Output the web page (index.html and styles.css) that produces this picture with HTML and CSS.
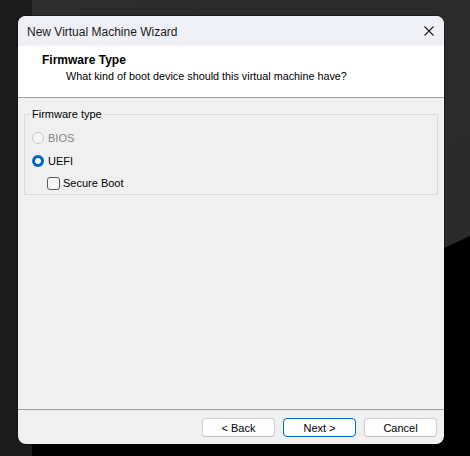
FILE: index.html
```html
<!DOCTYPE html>
<html>
<head>
<meta charset="utf-8">
<link rel="stylesheet" href="styles.css">
</head>
<body>
<div class="dialog">
  <div class="titlebar">
    <span class="title">New Virtual Machine Wizard</span>
    <span class="close"><svg width="10" height="10" viewBox="0 0 10 10"><path d="M0.5 0.5 L9.5 9.5 M9.5 0.5 L0.5 9.5" stroke="#1a1a1a" stroke-width="1.1" fill="none"/></svg></span>
  </div>
  <div class="header">
    <div class="h-title">Firmware Type</div>
    <div class="h-sub">What kind of boot device should this virtual machine have?</div>
  </div>
  <div class="content">
    <fieldset class="group">
      <legend>Firmware type</legend>
      <div class="opt disabled"><span class="radio"></span>BIOS</div>
      <div class="opt"><span class="radio checked"></span>UEFI</div>
      <div class="opt sub"><span class="check"></span>Secure Boot</div>
    </fieldset>
  </div>
  <div class="footer">
    <button class="btn">&lt; Back</button>
    <button class="btn primary">Next &gt;</button>
    <button class="btn">Cancel</button>
  </div>
</div>
</body>
</html>
```

FILE: styles.css
```css
html, body {
  margin: 0;
  padding: 0;
}
body {
  width: 470px;
  height: 456px;
  overflow: hidden;
  font-family: "Liberation Sans", Arial, sans-serif;
  font-size: 11px;
  color: #000;
  background:
    linear-gradient(to right, #1c1c1c 32px, transparent 32px),
    linear-gradient(155deg, #2d2d2d 0px, #2a2a2a 412px, #000 413px, #000 100%);
  padding-top: 16px;
  box-sizing: border-box;
}
.dialog {
  margin-left: 18px;
  width: 426px;
  height: 428px;
  display: flex;
  flex-direction: column;
  background: #f0f0f0;
  border-radius: 8px;
  overflow: hidden;
  box-shadow: 0 0 0 1px rgba(0,0,0,0.35);
}
.titlebar {
  height: 30px;
  flex: none;
  display: flex;
  align-items: center;
  justify-content: space-between;
  background: #eff0f6;
  padding: 0 10px 0 9px;
}
.title {
  font-size: 12px;
  color: #1a1a1a;
  padding-top: 1px;
}
.close {
  display: flex;
  width: 10px;
  height: 10px;
  margin-top: -1px;
}
.header {
  height: 52px;
  flex: none;
  background: #fff;
  border-bottom: 1px solid #a0a0a0;
  padding-top: 7px;
  box-sizing: border-box;
}
.h-title {
  font-weight: bold;
  font-size: 12px;
  line-height: 15px;
  padding-left: 24px;
}
.h-sub {
  font-size: 10.8px;
  line-height: 13px;
  margin-top: 2px;
  padding-left: 48px;
}
.content {
  flex: 1;
  padding-top: 10px;
}
.group {
  margin: 0 6px;
  border: 1px solid #dcdcdc;
  padding: 5px 0 0 7px;
  min-width: 0;
}
.group legend {
  padding: 0 2px;
  margin-left: -2px;
  line-height: 13px;
  color: #000;
}
.opt {
  display: flex;
  align-items: center;
  height: 23px;
}
.opt.disabled {
  color: #838383;
}
.opt.sub {
  padding-left: 15px;
  height: 22px;
}
.radio {
  width: 12px;
  height: 12px;
  box-sizing: border-box;
  border-radius: 50%;
  border: 1px solid #5a5a5a;
  margin-right: 4px;
  flex: none;
}
.disabled .radio {
  border-color: #c8c8c8;
  background: #f5f5f5;
}
.radio.checked {
  border: none;
  background: radial-gradient(circle, #fff 0 2.6px, #0067c0 3.2px);
}
.check {
  width: 13px;
  height: 13px;
  box-sizing: border-box;
  border: 1px solid #5a5a5a;
  border-radius: 3px;
  background: #f7f7f7;
  margin-right: 3px;
  flex: none;
}
.footer {
  flex: none;
  height: 35px;
  box-sizing: border-box;
  border-top: 1px solid #a0a0a0;
  display: flex;
  justify-content: flex-end;
  gap: 8px;
  padding: 8px 7px 0 0;
}
.btn {
  width: 73px;
  height: 19px;
  box-sizing: border-box;
  margin: 0;
  padding: 0;
  font-family: "Liberation Sans", Arial, sans-serif;
  font-size: 11px;
  color: #000;
  background: #fdfdfd;
  border: 1px solid #d0d0d0;
  border-bottom-color: #c2c2c2;
  border-radius: 4px;
}
.btn.primary {
  border-color: #0067c0;
}
```
